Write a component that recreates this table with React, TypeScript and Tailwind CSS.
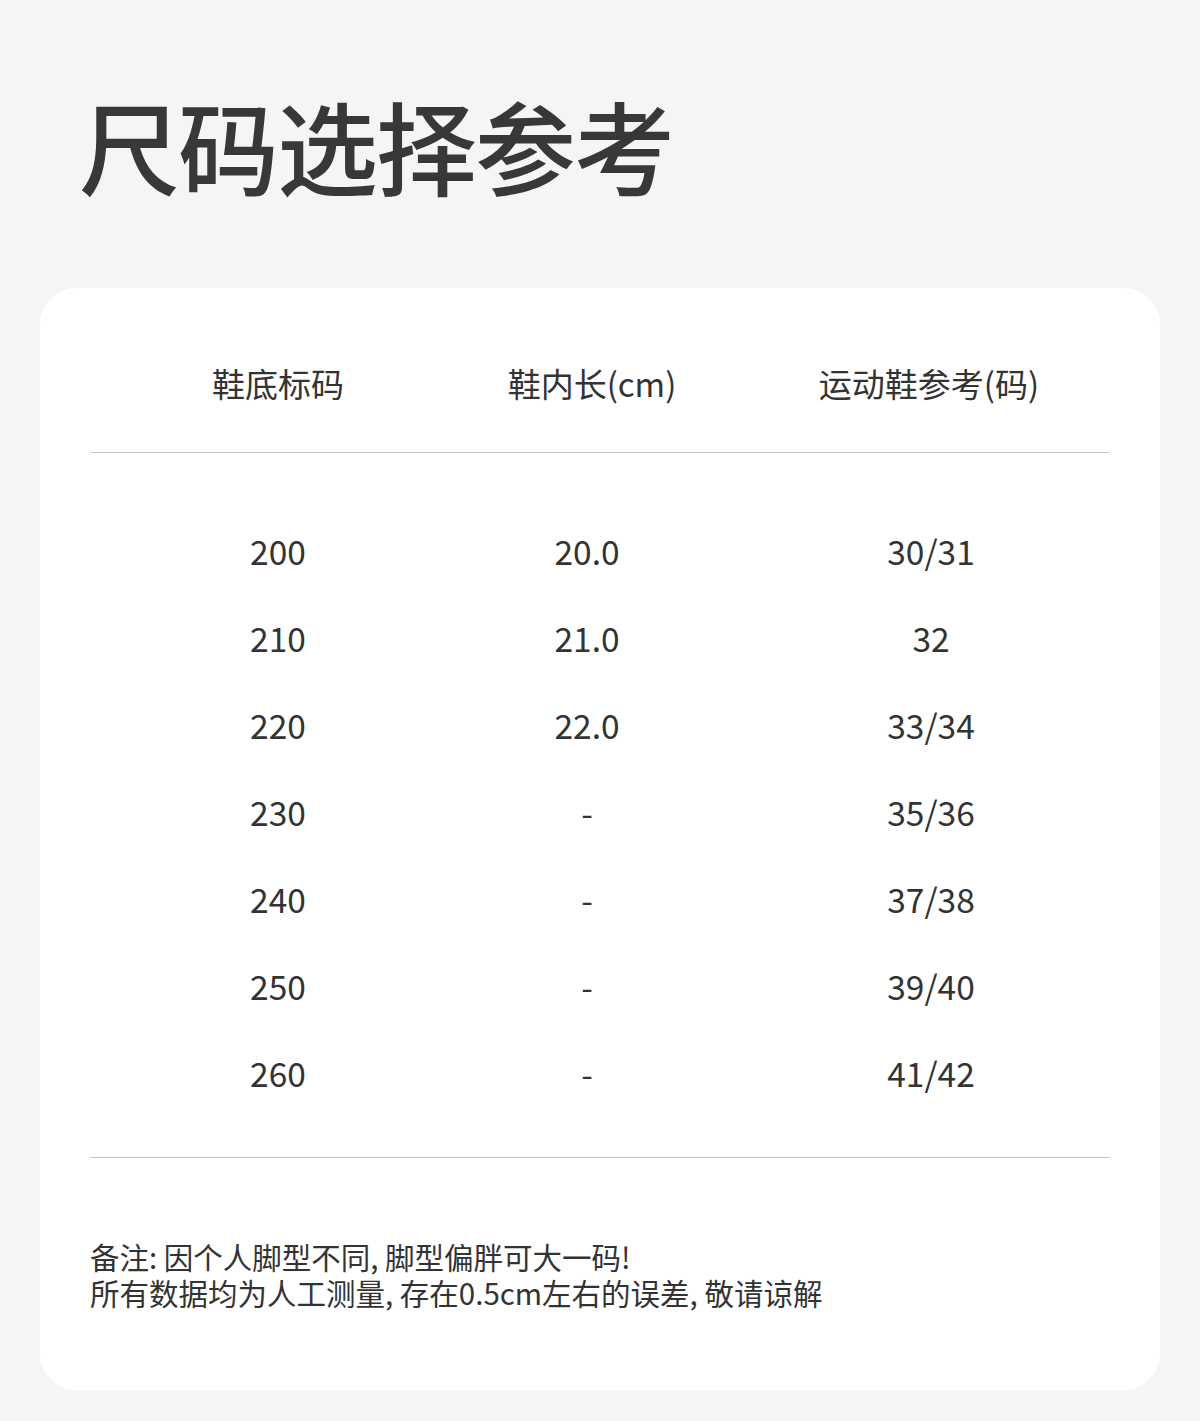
import React from "react";

const rows = [
  ["200", "20.0", "30/31"],
  ["210", "21.0", "32"],
  ["220", "22.0", "33/34"],
  ["230", "-", "35/36"],
  ["240", "-", "37/38"],
  ["250", "-", "39/40"],
  ["260", "-", "41/42"],
];

export default function App() {
  return (
    <div
      className="w-[1200px] h-[1421px] bg-[#f5f5f5] text-[#333333] overflow-hidden"
      style={{ fontFamily: '"Noto Sans CJK SC", "Noto Sans", sans-serif' }}
    >
      <h1 className="pl-[79px] pt-[94px] text-[101px] leading-none font-medium text-[#383838] tracking-[-2px]">
        尺码选择参考
      </h1>
      <div className="mx-[40px] mt-[93px] h-[1102px] rounded-[36px] bg-white px-[50px]">
        <div className="grid grid-cols-[376px_242px_402px] border-b border-[#c4c4c4] pt-[71px] pb-[45px] text-[33px] leading-[48px]">
          <div className="text-center">鞋底标码</div>
          <div className="text-center pl-[10px]">鞋内长(cm)</div>
          <div className="text-center pl-[40px]">运动鞋参考(码)</div>
        </div>
        <div className="border-b border-[#c4c4c4] pt-[54px] pb-[41px]">
          {rows.map((r) => (
            <div
              key={r[0]}
              className="grid grid-cols-[376px_242px_402px] h-[87px] items-center text-[33.5px] leading-none"
            >
              <div className="text-center">{r[0]}</div>
              <div className="text-center">{r[1]}</div>
              <div className="text-center pl-[44px]">{r[2]}</div>
            </div>
          ))}
        </div>
        <div className="pt-[80px] text-[29.5px] leading-[36px] text-[#333333]">
          <div>备注: 因个人脚型不同, 脚型偏胖可大一码!</div>
          <div>所有数据均为人工测量, 存在0.5cm左右的误差, 敬请谅解</div>
        </div>
      </div>
    </div>
  );
}
